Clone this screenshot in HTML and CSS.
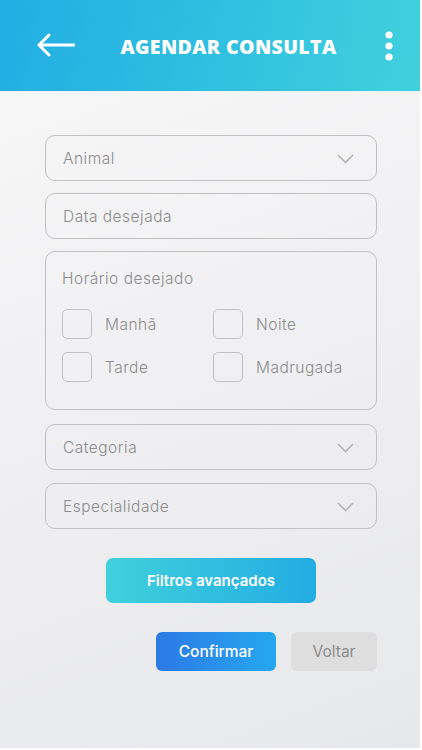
FILE: index.html
```html
<!DOCTYPE html>
<html><head><meta charset="utf-8"><title>Agendar consulta</title>
<link rel="stylesheet" href="styles.css">
</head><body>
<div class="app">
   <div class="bar">
      <svg class="back" width="38" height="24" viewBox="0 0 38 24"><path d="M2 12H37M2 12L12 2M2 12L12 22" fill="none" stroke="#fff" stroke-width="3" stroke-linecap="round" stroke-linejoin="round"/></svg>
      <div class="title">AGENDAR CONSULTA</div>
      <svg class="more" width="10" height="30" viewBox="0 0 10 30"><circle cx="5" cy="4" r="3.6" fill="#fff"/><circle cx="5" cy="15" r="3.6" fill="#fff"/><circle cx="5" cy="26" r="3.6" fill="#fff"/></svg>
   </div>
   <div class="form">
      <div class="field">Animal<svg class="chev" width="17" height="10" viewBox="0 0 17 10"><path d="M1 1L8.5 8.5L16 1" fill="none" stroke="#b4b4b4" stroke-width="1.6"/></svg></div>
      <div class="field">Data desejada</div>
      <div class="box">
         <div class="label">Horário desejado</div>
         <div class="checks">
            <div class="check"><span class="sq"></span>Manhã</div>
            <div class="check"><span class="sq"></span>Noite</div>
            <div class="check"><span class="sq"></span>Tarde</div>
            <div class="check"><span class="sq"></span>Madrugada</div>
         </div>
      </div>
      <div class="field gap">Categoria<svg class="chev" width="17" height="10" viewBox="0 0 17 10"><path d="M1 1L8.5 8.5L16 1" fill="none" stroke="#b4b4b4" stroke-width="1.6"/></svg></div>
      <div class="field">Especialidade<svg class="chev" width="17" height="10" viewBox="0 0 17 10"><path d="M1 1L8.5 8.5L16 1" fill="none" stroke="#b4b4b4" stroke-width="1.6"/></svg></div>
      <div class="filters">Filtros avançados</div>
      <div class="actions">
         <div class="btn ok">Confirmar</div>
         <div class="btn back-btn">Voltar</div>
      </div>
   </div>
</div>
</body></html>
```
FILE: styles.css
```css
body
{
	margin     : 0;
	background : #fff;
	font-family: Inter, "Noto Sans", sans-serif;
}
.app
{
	width      : 420px;
	height     : 748px;
	background : linear-gradient(160deg, #f8f8f9 0%, #eeeef0 60%, #e7e8ea 100%);
	overflow   : hidden;
}
.bar
{
	height     : 91px;
	display    : flex;
	align-items: center;
	padding    : 0 26px 0 37px;
	background : linear-gradient(100deg, #22ade3 0%, #2fbfe0 50%, #41d0dc 100%);
	color      : #fff;
}
.back { margin-top: -2px; }
.title
{
	flex        : 1;
	text-align  : center;
	font-family : "Open Sans", sans-serif;
	font-weight : 800;
	font-size   : 19.5px;
	letter-spacing: 0.4px;
	padding-right: 2px;
	margin-top  : 1px;
}
.more { margin-top: 1px; }
.form
{
	padding       : 44px 43px 0 45px;
	display       : flex;
	flex-direction: column;
}
.field, .box
{
	border        : 1px solid #c1c1c1;
	border-radius : 10px;
	color         : #8c8c8c;
	font-size     : 15.5px;
	font-weight   : 300;
	letter-spacing: 0.5px;
}
.field
{
	height        : 44px;
	box-sizing    : content-box;
	display       : flex;
	align-items   : center;
	justify-content: space-between;
	padding       : 1px 22px 0 17px;
	height        : 43px;
	margin-bottom : 12px;
}
.field.gap { margin-top: 2px; margin-bottom: 13px; }
.chev { margin-top: 0; }
.box
{
	padding       : 17px 17px 0 16px;
	box-sizing    : border-box;
	height        : 159px;
	margin-bottom : 12px;
}
.label { line-height: 20px; }
.checks
{
	display              : grid;
	grid-template-columns: 151px 1fr;
	row-gap              : 13px;
	margin-top           : 20px;
}
.check
{
	display    : flex;
	align-items: center;
}
.sq
{
	width        : 28px;
	height       : 28px;
	border       : 1px solid #c1c1c1;
	border-radius: 5px;
	margin-right : 13px;
}
.filters
{
	align-self   : center;
	margin-top   : 17px;
	width        : 210px;
	height       : 45px;
	line-height  : 45px;
	text-align   : center;
	border-radius: 7px;
	color        : #fff;
	font-weight  : 600;
	font-size    : 15px;
	background   : linear-gradient(90deg, #41d0dc 0%, #22ade3 100%);
}
.actions
{
	display        : flex;
	justify-content: flex-end;
	gap            : 15px;
	margin-top     : 29px;
}
.btn
{
	height       : 39px;
	line-height  : 39px;
	text-align   : center;
	border-radius: 6px;
	font-size    : 15.5px;
	font-weight  : 400;
}
.ok
{
	width      : 120px;
	color      : #fff;
	font-weight: 500;
	background : linear-gradient(90deg, #2c79e5 0%, #25a8f0 100%);
}
.back-btn
{
	width      : 86px;
	color      : #8c8c8c;
	background : #dedede;
}
```
